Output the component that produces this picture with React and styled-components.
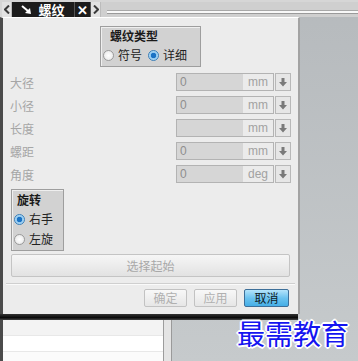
import React from "react";
import styled, { createGlobalStyle } from "styled-components";

const Global = createGlobalStyle`
  html, body { margin: 0; padding: 0; }
  body {
    width: 358px;
    height: 361px;
    overflow: hidden;
    background: #b9bdc0;
    font-family: "Noto Sans CJK SC", "Liberation Sans", sans-serif;
    font-size: 12px;
  }
`;

const Page = styled.div`
  position: relative;
  width: 358px;
  height: 361px;
  display: flex;
  flex-direction: column;
  background: linear-gradient(180deg, #b6babd 0%, #c6cacc 100%);
`;

const TopBar = styled.div`
  height: 16px;
  padding: 2px 0 0 2px;
  display: flex;
  align-items: stretch;
  background: #d6d6d6;
`;

const Tab = styled.div`
  flex: none;
  box-sizing: border-box;
  display: flex;
  align-items: center;
  justify-content: center;
  gap: 6px;
  width: ${(p) => p.w}px;
  background: ${(p) => (p.dark ? "#1c1c1c" : "#e2e2e2")};
  color: #ffffff;
  font-size: 13px;
  font-weight: bold;
  border-right: 1px solid ${(p) => (p.dark ? "#555" : "#bcbcbc")};
  line-height: 15px;
`;

const Chevron = ({ dir }) => (
  <svg width="6" height="9" viewBox="0 0 6 9">
    <path
      d={dir === "left" ? "M5 0.5L1 4.5 5 8.5" : "M1 0.5L5 4.5 1 8.5"}
      stroke="#3a3a3a"
      strokeWidth="2"
      fill="none"
    />
  </svg>
);

const Track = styled.div`
  flex: 1;
  display: flex;
  flex-direction: column;
  background: #cfcfcf;
`;

const TrackLine = styled.div`
  margin: 8px 0 0 6px;
  height: 2px;
  background: #f8f8f8;
  border-top: 1px solid #a8a8a8;
  border-bottom: 1px solid #9a9a9a;
`;

const Body = styled.div`
  flex: 1;
  display: flex;
`;

const LeftCol = styled.div`
  width: 300px;
  display: flex;
  flex-direction: column;
`;

const Dialog = styled.div`
  height: 297px;
  width: 300px;
  box-sizing: border-box;
  background: #ececec;
  border-left: 3px solid #4b4b4b;
  border-right: 2px solid #a3a3a3;
  border-top: 1px solid #ffffff;
  display: flex;
  flex-direction: column;
`;

const DarkBar = styled.div`
  height: 6px;
  width: 298px;
  background: linear-gradient(180deg, #333 0%, #0a0a0a 60%, #444 100%);
`;

const Group = styled.div`
  box-sizing: border-box;
  width: ${(p) => p.w}px;
  height: ${(p) => p.h}px;
  margin: ${(p) => p.m};
  padding: ${(p) => p.pad};
  background: #d2d2d2;
  border: 1px solid #9e9e9e;
  box-shadow: inset 1px 1px 0 #efefef;
  display: flex;
  flex-direction: column;
`;

const GroupTitle = styled.div`
  font-weight: bold;
  color: #1a1a1a;
  font-size: 12px;
  line-height: 16px;
  margin-left: ${(p) => p.ml || 0}px;
`;

const RadioRow = styled.div`
  display: flex;
  align-items: center;
  gap: ${(p) => p.gap || 0}px;
  margin-top: ${(p) => p.mt || 0}px;
`;

const RadioItem = styled.label`
  display: flex;
  align-items: center;
  gap: 4px;
  color: #222;
  font-size: 12px;
  line-height: 18px;
`;

const Dot = styled.span`
  width: 11px;
  height: 11px;
  border-radius: 50%;
  box-sizing: border-box;
  border: 1px solid ${(p) => (p.on ? "#3a7fb8" : "#9a9a9a")};
  background: ${(p) =>
    p.on
      ? "radial-gradient(circle, #1b72c4 0 2.5px, #8fc8f0 3px, #d8eefc 100%)"
      : "radial-gradient(circle, #ffffff 0%, #e4e4e4 100%)"};
`;

const Radio = ({ on, children }) => (
  <RadioItem>
    <Dot on={on} />
    {children}
  </RadioItem>
);

const Rows = styled.div`
  margin-top: 6px;
  display: flex;
  flex-direction: column;
  gap: 5px;
`;

const Row = styled.div`
  height: 18px;
  display: flex;
  align-items: center;
`;

const Label = styled.div`
  width: 173px;
  box-sizing: border-box;
  padding-left: 7px;
  color: #a6a6a6;
  font-size: 12px;
`;

const Field = styled.div`
  width: 116px;
  height: 18px;
  display: flex;
  gap: 1px;
`;

const Input = styled.div`
  width: 67px;
  box-sizing: border-box;
  border: 1px solid #b3b3b3;
  border-right: 0;
  background: #d6d6d6;
  color: #8e8e8e;
  font-family: "Liberation Sans", sans-serif;
  font-size: 12px;
  line-height: 16px;
  padding-left: 3px;
`;

const Unit = styled.div`
  width: 31px;
  box-sizing: border-box;
  border: 1px solid #b3b3b3;
  border-left: 0;
  margin-left: -1px;
  background: #ebebeb;
  color: #a2a2a2;
  font-family: "Liberation Sans", sans-serif;
  font-size: 12px;
  line-height: 16px;
  text-align: center;
`;

const Spin = styled.div`
  width: 16px;
  box-sizing: border-box;
  border: 1px solid #b8b8b8;
  background: #e6e6e6;
  display: flex;
  align-items: center;
  justify-content: center;
`;

const DownArrow = () => (
  <svg width="8" height="9" viewBox="0 0 8 9">
    <path d="M2.5 0h3v4h2.5L4 8.5 0 4h2.5z" fill="#7a7a7a" />
  </svg>
);

const SelectBtn = styled.div`
  margin: 3px 0 0 8px;
  width: 279px;
  height: 23px;
  box-sizing: border-box;
  border: 1px solid #c4c4c4;
  border-radius: 2px;
  background: linear-gradient(180deg, #f6f6f6 0%, #e2e2e2 100%);
  color: #a8a8a8;
  text-align: center;
  line-height: 21px;
  font-size: 12px;
`;

const Separator = styled.div`
  margin: 6px 3px 0 3px;
  border-top: 1px solid #cfcfcf;
  border-bottom: 1px solid #fafafa;
`;

const Actions = styled.div`
  display: flex;
  justify-content: flex-end;
  gap: 7px;
  margin: 4px 9px 0 0;
`;

const ActionBtn = styled.div`
  width: ${(p) => (p.primary ? 45 : 43)}px;
  height: 18px;
  box-sizing: border-box;
  border: 1px solid ${(p) => (p.primary ? "#3d6f99" : "#c2c2c2")};
  border-radius: 2px;
  background: ${(p) =>
    p.primary
      ? "linear-gradient(180deg, #b5e4fb 0%, #6cc3ef 50%, #45aee6 100%)"
      : "linear-gradient(180deg, #f8f8f8 0%, #e6e6e6 100%)"};
  color: ${(p) => (p.primary ? "#0e1a26" : "#b0b0b0")};
  font-size: 12px;
  line-height: 16px;
  text-align: center;
`;

const List = styled.div`
  flex: 1;
  display: flex;
  width: 172px;
`;

const ListBody = styled.div`
  flex: 1;
  border-left: 3px solid #4b4b4b;
  border-right: 1px solid #9c9c9c;
  background: #ffffff;
  display: flex;
  flex-direction: column;
`;

const ListRow = styled.div`
  height: ${(p) => p.h}px;
  background: ${(p) => p.bg};
  border-bottom: 1px solid #e8e8e8;
`;

const ListGutter = styled.div`
  width: 7px;
  background: #e4e4e4;
  border-right: 1px solid #9a9a9a;
`;

const RightFill = styled.div`
  flex: 1;
`;

const Watermark = styled.div`
  position: absolute;
  left: 237px;
  top: 313px;
  font-size: 28px;
  color: #1414f0;
  font-family: "Noto Sans CJK SC", sans-serif;
  text-shadow: 1px 1px 0 #fff, -1px -1px 0 #fff, 1px -1px 0 #fff, -1px 1px 0 #fff,
    2px 0 0 #fff, -2px 0 0 #fff, 0 2px 0 #fff, 0 -2px 0 #fff;
  line-height: 40px;
`;

const rows = [
  { label: "大径", value: "0", unit: "mm" },
  { label: "小径", value: "0", unit: "mm" },
  { label: "长度", value: "", unit: "mm" },
  { label: "螺距", value: "0", unit: "mm" },
  { label: "角度", value: "0", unit: "deg" },
];

export default function App() {
  return (
    <Page>
      <Global />
      <TopBar>
        <Tab w={10}>
          <Chevron dir="left" />
        </Tab>
        <Tab dark w={63}>
          <svg width="11" height="10" viewBox="0 0 11 10">
            <path d="M1 1l6 5" stroke="#fff" strokeWidth="2" />
            <path d="M10 9L4 8l5-5z" fill="#fff" />
          </svg>
          <span>螺纹</span>
        </Tab>
        <Tab dark w={16}>✕</Tab>
        <Tab w={10}>
          <Chevron dir="right" />
        </Tab>
        <Track>
          <TrackLine />
        </Track>
      </TopBar>
      <Body>
        <LeftCol>
          <Dialog>
            <Group w={101} h={41} m="8px 0 0 97px" pad="1px 0 0 2px">
              <GroupTitle ml={7}>螺纹类型</GroupTitle>
              <RadioRow gap={6} mt={2}>
                <Radio>符号</Radio>
                <Radio on>详细</Radio>
              </RadioRow>
            </Group>
            <Rows>
              {rows.map((r) => (
                <Row key={r.label}>
                  <Label>{r.label}</Label>
                  <Field>
                    <Input>{r.value}</Input>
                    <Unit>{r.unit}</Unit>
                    <Spin>
                      <DownArrow />
                    </Spin>
                  </Field>
                </Row>
              ))}
            </Rows>
            <Group w={53} h={62} m="6px 0 0 8px" pad="2px 0 0 2px">
              <GroupTitle ml={3}>旋转</GroupTitle>
              <RadioRow mt={2}>
                <Radio on>右手</Radio>
              </RadioRow>
              <RadioRow mt={2}>
                <Radio>左旋</Radio>
              </RadioRow>
            </Group>
            <SelectBtn>选择起始</SelectBtn>
            <Separator />
            <Actions>
              <ActionBtn>确定</ActionBtn>
              <ActionBtn>应用</ActionBtn>
              <ActionBtn primary>取消</ActionBtn>
            </Actions>
          </Dialog>
          <DarkBar />
          <List>
            <ListBody>
              <ListRow h={15} bg="#f3f3f3" />
              <ListRow h={15} bg="#ffffff" />
              <ListRow h={15} bg="#fbfbfb" />
            </ListBody>
            <ListGutter />
          </List>
        </LeftCol>
        <RightFill />
      </Body>
      <Watermark>最需教育</Watermark>
    </Page>
  );
}
